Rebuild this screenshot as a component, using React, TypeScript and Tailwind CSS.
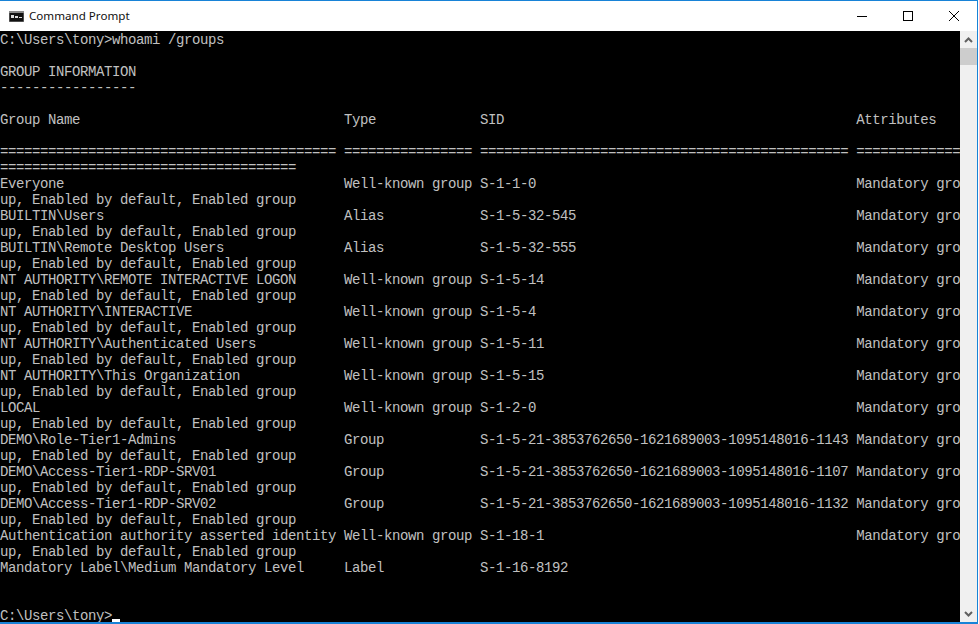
const sep = "=".repeat(42) + " " + "=".repeat(16) + " " + "=".repeat(46) + " " + "=".repeat(13);
const ENABLED = "up, Enabled by default, Enabled group";
const MAND = "Mandatory gro";

function row(name: string, type: string, sid: string) {
  return name.padEnd(43) + type.padEnd(17) + sid.padEnd(47) + MAND;
}

const lines: string[] = [
  "C:\\Users\\tony>whoami /groups",
  "",
  "GROUP INFORMATION",
  "-----------------",
  "",
  "Group Name".padEnd(43) + "Type".padEnd(17) + "SID".padEnd(47) + "Attributes",
  "",
  sep,
  "=".repeat(37),
  row("Everyone", "Well-known group", "S-1-1-0"),
  ENABLED,
  row("BUILTIN\\Users", "Alias", "S-1-5-32-545"),
  ENABLED,
  row("BUILTIN\\Remote Desktop Users", "Alias", "S-1-5-32-555"),
  ENABLED,
  row("NT AUTHORITY\\REMOTE INTERACTIVE LOGON", "Well-known group", "S-1-5-14"),
  ENABLED,
  row("NT AUTHORITY\\INTERACTIVE", "Well-known group", "S-1-5-4"),
  ENABLED,
  row("NT AUTHORITY\\Authenticated Users", "Well-known group", "S-1-5-11"),
  ENABLED,
  row("NT AUTHORITY\\This Organization", "Well-known group", "S-1-5-15"),
  ENABLED,
  row("LOCAL", "Well-known group", "S-1-2-0"),
  ENABLED,
  row("DEMO\\Role-Tier1-Admins", "Group", "S-1-5-21-3853762650-1621689003-1095148016-1143"),
  ENABLED,
  row("DEMO\\Access-Tier1-RDP-SRV01", "Group", "S-1-5-21-3853762650-1621689003-1095148016-1107"),
  ENABLED,
  row("DEMO\\Access-Tier1-RDP-SRV02", "Group", "S-1-5-21-3853762650-1621689003-1095148016-1132"),
  ENABLED,
  row("Authentication authority asserted identity", "Well-known group", "S-1-18-1"),
  ENABLED,
  "Mandatory Label\\Medium Mandatory Level".padEnd(43) + "Label".padEnd(17) + "S-1-16-8192",
  "",
  "",
];

export default function App() {
  return (
    <div className="h-[624px] w-[979px] overflow-hidden bg-white pr-px">
      <div className="flex h-full flex-col border-t border-r border-b-2 border-[#1883d7]">
        <div className="flex h-[30px] shrink-0 items-center bg-white">
          <svg width="15" height="11" viewBox="0 0 15 11" className="ml-[9px] mr-[5px]">
            <rect width="15" height="11" fill="#8a8a8a" />
            <rect x="0.5" y="2" width="14" height="8.5" fill="#111" />
            <rect x="2" y="4" width="3" height="3" fill="#ddd" />
            <rect x="6" y="5" width="3" height="2" fill="#ddd" />
            <rect x="10" y="6" width="3" height="1" fill="#ddd" />
          </svg>
          <span className="font-['Noto_Sans',sans-serif] text-[11.6px] text-[#111]">Command Prompt</span>
          <div className="ml-auto flex h-full items-center">
            <div className="flex h-full w-[46px] items-center justify-center">
              <div className="h-px w-[10px] bg-black" />
            </div>
            <div className="flex h-full w-[46px] items-center justify-center">
              <div className="h-[10px] w-[10px] border border-black" />
            </div>
            <div className="flex h-full w-[46px] items-center justify-center">
              <svg width="10" height="10" viewBox="0 0 10 10">
                <path d="M0 0L10 10M10 0L0 10" stroke="#000" strokeWidth="1" fill="none" />
              </svg>
            </div>
          </div>
        </div>
        <div className="flex min-h-0 flex-1">
          <div className="w-[960px] shrink-0 overflow-hidden bg-black pt-[1px]">
            <pre className="font-['Liberation_Mono',monospace] text-[14px] leading-[16px] tracking-[-0.4px] text-[#c0c0c0]">
              {lines.join("\n")}
              {"\n"}
              <span>{"C:\\Users\\tony>"}</span>
              <span className="relative top-[2px] inline-block h-[3px] w-[8px] bg-white align-baseline" />
            </pre>
          </div>
          <div className="flex w-[17px] shrink-0 flex-col bg-[#f0f0f0]">
            <div className="flex h-[17px] items-center justify-center">
              <svg width="9" height="6" viewBox="0 0 9 6">
                <path d="M1 5L4.5 1.5L8 5" stroke="#606060" strokeWidth="2" fill="none" />
              </svg>
            </div>
            <div className="h-[17px] bg-[#cdcdcd]" />
            <div className="flex-1" />
            <div className="flex h-[17px] items-center justify-center">
              <svg width="9" height="6" viewBox="0 0 9 6">
                <path d="M1 1L4.5 4.5L8 1" stroke="#606060" strokeWidth="2" fill="none" />
              </svg>
            </div>
          </div>
        </div>
      </div>
    </div>
  );
}
